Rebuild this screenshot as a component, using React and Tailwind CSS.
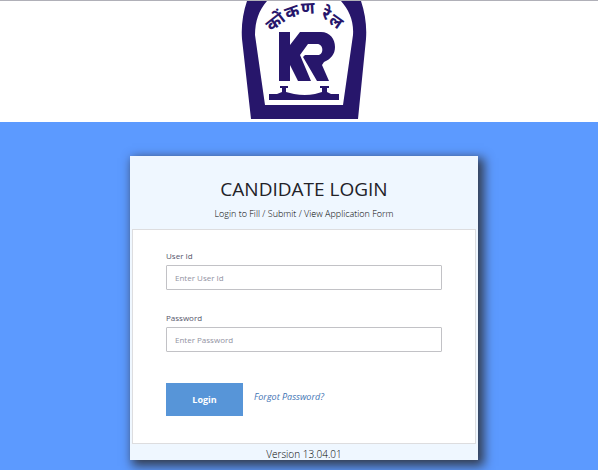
const Emblem = () => (
  <svg viewBox="0 0 150 121" className="block h-[121px] w-[150px] shrink-0" role="img" aria-label="Konkan Railway">
    {/* Arch */}
    <path
      fill="#27166b"
      fillRule="evenodd"
      d="M17 0C13 12 11 25 12 38L21 118H128L136 38C137 25 135 12 131 0ZM37 0H111C119 9 124 20 123 34L113 104H35L25 34C25 20 29 9 37 0Z"
    />

    {/* Name along the arch */}
    <g
      fill="#27166b"
      fontSize="17"
      fontWeight="700"
      fontFamily="'Noto Sans Devanagari', 'Noto Sans', sans-serif"
      textAnchor="middle"
    >
      <text transform="translate(49 25) rotate(-38)">कों</text>
      <text transform="translate(64 16) rotate(-20)">क</text>
      <text transform="translate(78 13) rotate(-3)">ण</text>
      <text transform="translate(94 18) rotate(24)">रे</text>
      <text transform="translate(103 25) rotate(35)">ल</text>
    </g>

    {/* Monogram */}
    <path
      fill="#27166b"
      d="M49 31H60V44L70 31H91C100 31 105 38 105 46C105 53 101 58 94 61L92 64L99 80H87L73 56L75 54H88C94 54 94 43 87 43H78L70 54L81 80H68L60 64V80H49Z"
    />

    {/* Rails */}
    <path
      fill="#27166b"
      d="M50 85H58V87H56V91L64 93Q75 95 85 93L92 91V87H90V85H99V87H97V91L101 93H109V99H39V93H47L52 91V87H50Z"
    />
  </svg>
);

const Field = ({ id, label, type, placeholder }) => (
  <div>
    <label htmlFor={id} className="block text-[8px] leading-4 text-[#55556a]">
      {label}
    </label>
    <input
      id={id}
      type={type}
      placeholder={placeholder}
      className="mt-px block h-[25px] w-full rounded-[1px] border border-[#c2c2c6] bg-white px-2 text-[8px] text-[#55556a] placeholder:text-[#9292a2]"
    />
  </div>
);

const App = () => {
  return (
    <div className="flex min-h-screen flex-col bg-[#5c9aff] font-['Open_Sans',sans-serif]">
      <header className="flex justify-center border-t border-[#b0b0b8] bg-white pl-3">
        <Emblem />
      </header>

      <main className="flex grow justify-center pt-[34px] pb-[10px] pl-[10px]">
        <section className="w-full max-w-[348px] self-start bg-[#eff7ff] px-[2px] shadow-[4px_4px_10px_2px_#333c50]">
          <div className="pt-[19px] pb-[7px] text-center">
            <h1 className="text-[19px] leading-7 font-medium text-[#222228]">CANDIDATE LOGIN</h1>
            <p className="mt-[3px] text-[9px] leading-4 font-light text-black">
              Login to Fill / Submit / View Application Form
            </p>
          </div>

          <form className="border border-[#dddddf] bg-white px-[33px] pt-[18px] pb-[27px]">
            <div className="flex flex-col gap-5">
              <Field id="user-id" label="User Id" type="text" placeholder="Enter User Id" />
              <Field id="password" label="Password" type="password" placeholder="Enter Password" />
            </div>

            <div className="mt-[31px] flex items-start gap-[11px]">
              <button type="button" className="h-[33px] w-[77px] bg-[#5795d8] text-[9px] font-bold text-white">
                Login
              </button>
              <a href="#forgot" className="mt-[6px] text-[9px] leading-4 text-[#3f74b4] italic">
                Forgot Password?
              </a>
            </div>
          </form>

          <footer className="h-4 text-center text-[10px] leading-5 font-light text-black">Version 13.04.01</footer>
        </section>
      </main>
    </div>
  );
};

export default App;
